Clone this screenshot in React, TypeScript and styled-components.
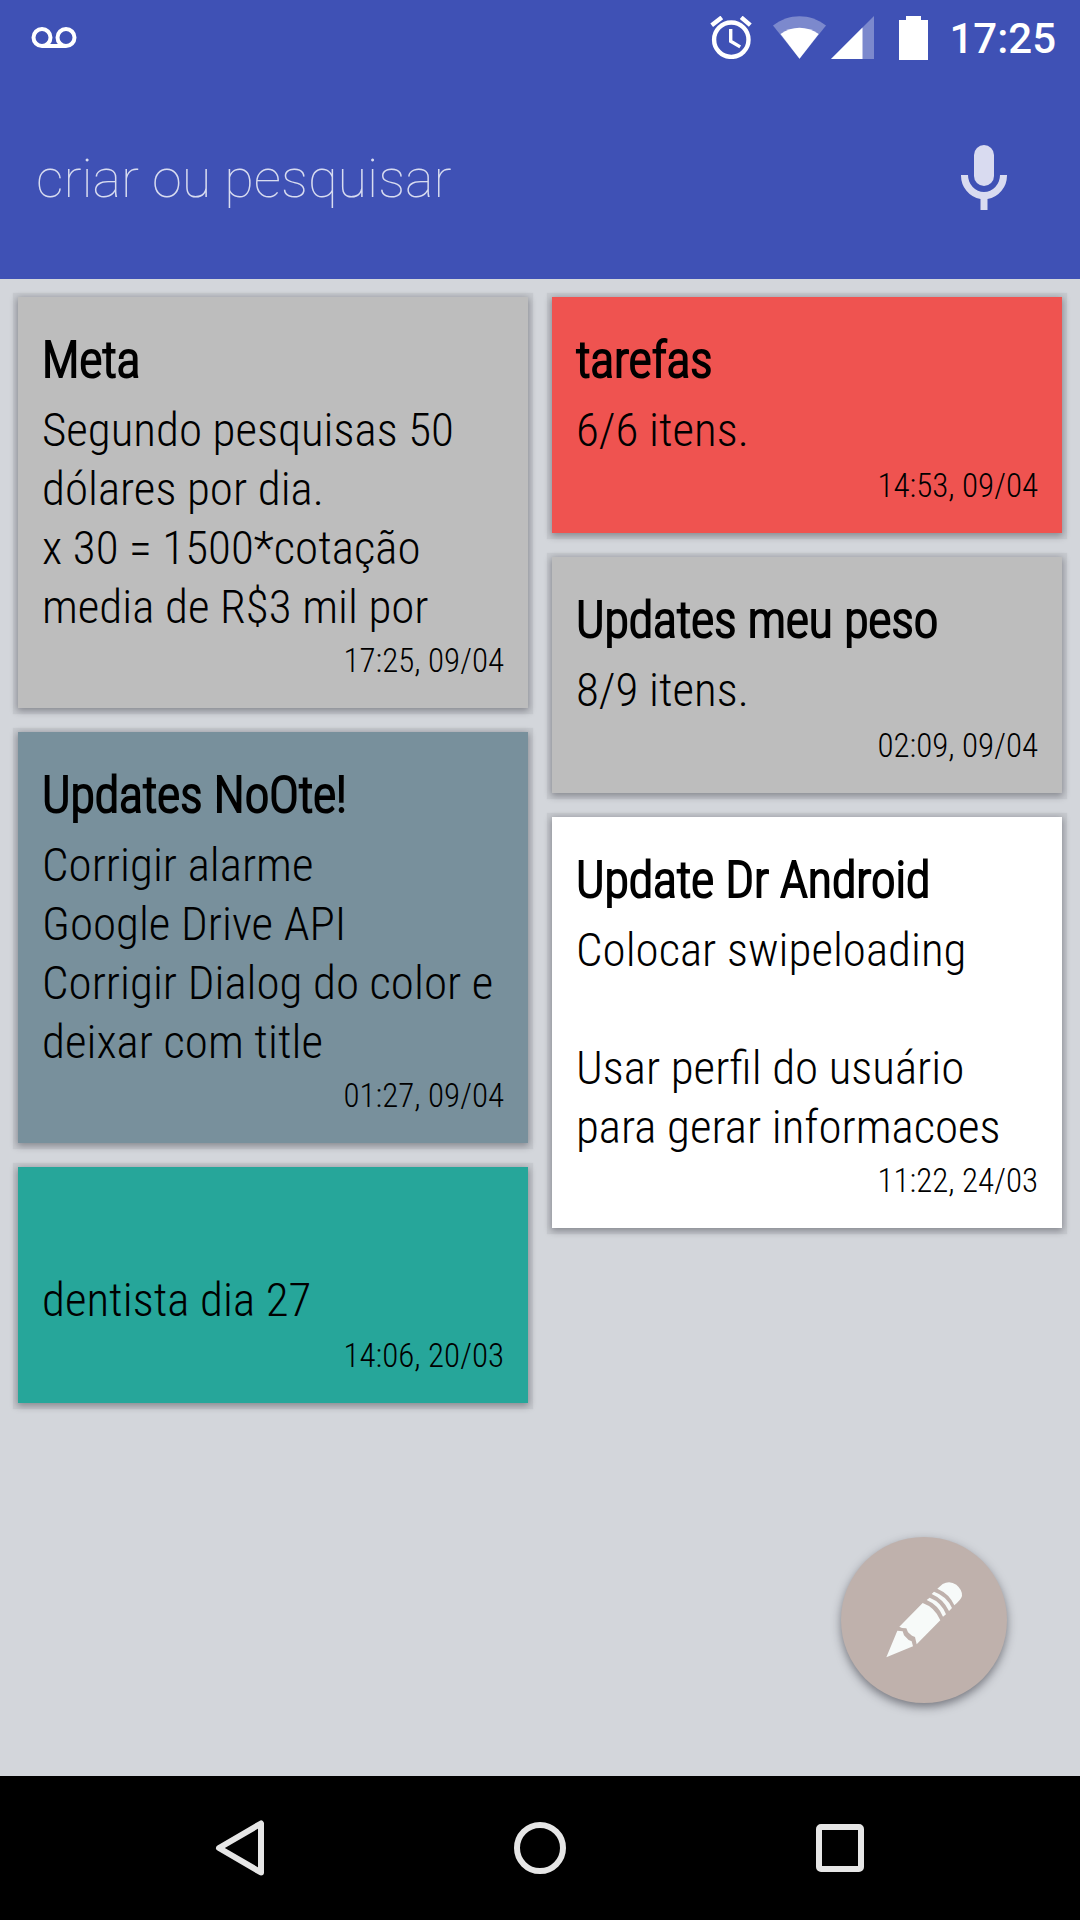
import React from "react";
import styled, { createGlobalStyle } from "styled-components";

const GlobalStyle = createGlobalStyle`
  *, *::before, *::after { box-sizing: border-box; }
  body { margin: 0; background: #d3d6db; }
  h2, p { margin: 0; font-weight: inherit; }
`;

const Screen = styled.div`
  display: flex;
  flex-direction: column;
  min-height: 100vh;
  background: #d3d6db;
  color: #000;
  font-family: "Roboto Condensed", Roboto, sans-serif;
`;

const Header = styled.header`
  background: #3f51b5;
  color: #fff;
`;

const StatusBar = styled.div`
  display: flex;
  align-items: center;
  height: 75px;
  padding: 0 24px 0 31px;
  svg { display: block; flex: none; }
`;

const StatusIcons = styled.div`
  display: flex;
  align-items: center;
  margin-left: auto;
`;

const Radio = styled.div`
  display: flex;
  gap: 5px;
  margin: 0 25px 0 21px;
`;

const Clock = styled.time`
  margin-left: 21px;
  padding-top: 2px;
  font: 500 42px/50px Roboto, sans-serif;
`;

const SearchBar = styled.form`
  display: flex;
  align-items: center;
  height: 204px;
  padding: 0 60px 0 36px;
`;

const SearchInput = styled.input`
  flex: 1;
  min-width: 0;
  padding: 4px 0 0;
  border: 0;
  outline: 0;
  background: transparent;
  color: #fff;
  font: 100 54px/64px Roboto, sans-serif;
  &::placeholder { color: #fff; opacity: 0.8; }
`;

const IconButton = styled.button`
  display: grid;
  place-items: center;
  width: 72px;
  height: 96px;
  padding: 0;
  border: 0;
  background: transparent;
`;

const Main = styled.main`
  position: relative;
  flex: 1;
  display: grid;
  grid-template-columns: repeat(2, minmax(0, 1fr));
  gap: 24px;
  align-items: start;
  padding: 18px;
`;

const Column = styled.div`
  display: flex;
  flex-direction: column;
  gap: 24px;
`;

const Card = styled.article<{ $color: string }>`
  padding: 30px 24px 26px;
  background: ${(p) => p.$color};
  box-shadow:
    0 2px 7px 1px rgba(30, 30, 40, 0.38),
    0 1px 1px 5px rgba(30, 30, 40, 0.06);
`;

const CardTitle = styled.h2`
  min-height: 66px;
  font-size: 50px;
  line-height: 66px;
  font-weight: 300;
  -webkit-text-stroke: 2px currentColor;
`;

const CardBody = styled.p`
  min-height: 61px;
  margin: 7px 0 4px;
  font-size: 47px;
  line-height: 59px;
  font-weight: 300;
  white-space: pre-line;
`;

const CardDate = styled.time`
  display: block;
  font-size: 33px;
  line-height: 42px;
  font-weight: 300;
  text-align: right;
`;

const Fab = styled.button`
  position: absolute;
  right: 73px;
  bottom: 73px;
  width: 166px;
  height: 166px;
  padding: 0;
  border: 0;
  border-radius: 50%;
  background: #bfb1ac;
  box-shadow: 0 4px 10px rgba(30, 30, 40, 0.5);
  svg { display: block; }
`;

const NavBar = styled.nav`
  display: flex;
  height: 144px;
  padding: 0 90px;
  background: #000;
`;

const NavButton = styled.button`
  flex: 1;
  display: grid;
  place-items: center;
  padding: 0;
  border: 0;
  background: transparent;
`;

type Note = { title: string; body: string; date: string; color: string };

const left: Note[] = [
  {
    title: "Meta",
    body: "Segundo pesquisas 50\ndólares por dia.\nx 30 = 1500*cotação\nmedia de R$3 mil por",
    date: "17:25, 09/04",
    color: "#bdbdbd",
  },
  {
    title: "Updates NoOte!",
    body: "Corrigir alarme\nGoogle Drive API\nCorrigir Dialog do color e\ndeixar com title",
    date: "01:27, 09/04",
    color: "#78909c",
  },
  { title: "", body: "dentista dia 27", date: "14:06, 20/03", color: "#26a69a" },
];

const right: Note[] = [
  { title: "tarefas", body: "6/6 itens.", date: "14:53, 09/04", color: "#ef5350" },
  { title: "Updates meu peso", body: "8/9 itens.", date: "02:09, 09/04", color: "#bdbdbd" },
  {
    title: "Update Dr Android",
    body: "Colocar swipeloading\n\nUsar perfil do usuário\npara gerar informacoes",
    date: "11:22, 24/03",
    color: "#ffffff",
  },
];

const NoteColumn = ({ notes }: { notes: Note[] }) => (
  <Column>
    {notes.map((n) => (
      <Card key={n.date} $color={n.color}>
        <CardTitle>{n.title}</CardTitle>
        <CardBody>{n.body}</CardBody>
        <CardDate>{n.date}</CardDate>
      </Card>
    ))}
  </Column>
);

export default function App() {
  return (
    <Screen>
      <GlobalStyle />
      <Header>
        <StatusBar>
          <svg width="46" height="21" viewBox="0 0 46 21" fill="none" stroke="#fff" strokeWidth="4" aria-hidden="true">
            <circle cx="11" cy="10.5" r="8.5" />
            <circle cx="35" cy="10.5" r="8.5" />
            <path d="M11 19h24" />
          </svg>
          <StatusIcons>
            <svg width="42" height="43" viewBox="0 0 42 43" fill="none" stroke="#fff" aria-hidden="true">
              <circle cx="21.3" cy="23.7" r="17.2" strokeWidth="4.4" />
              <path d="M20.7 13v12.3l9.5 5.6" strokeWidth="3.4" />
              <path d="M1.700 9.200 11.800 1.400M40.300 9.200 31.200 1.400" strokeWidth="4.4" />
            </svg>
            <Radio>
              <svg width="53" height="43" viewBox="0 0 53 43" fill="#fff" aria-hidden="true">
                <path d="M26.500 42.700 0 9.500C15.500-3 37.500-3 53 9.500Z" opacity=".32" />
                <path d="M26.500 42.700 7.500 18C19 9.500 34 9.500 45.700 18Z" />
              </svg>
              <svg width="43" height="43" viewBox="0 0 43 43" fill="#fff" aria-hidden="true">
                <path d="M0 43 43 0V43Z" opacity=".32" />
                <path d="M0 43 31.500 11.500V43Z" />
              </svg>
            </Radio>
            <svg width="29" height="44" viewBox="0 0 29 44" fill="#fff" aria-hidden="true">
              <path d="M0 4h7V0h15v4h7v40H0Z" />
            </svg>
            <Clock>17:25</Clock>
          </StatusIcons>
        </StatusBar>
        <SearchBar onSubmit={(e) => e.preventDefault()}>
          <SearchInput aria-label="criar ou pesquisar" placeholder="criar ou pesquisar" />
          <IconButton type="button" aria-label="Voz">
            <svg width="46" height="65" viewBox="0 0 46 65" fill="#d9dbf0">
              <rect x="13" y="0" width="20" height="41" rx="10" />
              <path d="M0 30h7a16 17 0 0 0 32 0h7a23 24 0 0 1-19.500 24v11h-7V54A23 24 0 0 1 0 30Z" />
            </svg>
          </IconButton>
        </SearchBar>
      </Header>
      <Main>
        <NoteColumn notes={left} />
        <NoteColumn notes={right} />
        <Fab type="button" aria-label="Nova nota">
          <svg width="166" height="166" viewBox="63 51 498 498" fill="#f7faf9">
            <path d="M352 206 368 192Q389 180 409 194 428 210 426 228 423 239 403 256 389 222 352 206Z" />
            <path d="M335 222 342 215Q380 228 396 264L387 273Q370 237 335 222Z" />
            <path d="M320 240 329 233Q365 247 378 283L369 290Q355 255 320 240Z" />
            <path d="M308 249Q345 262 361 301L290 373 285 351 276 347 264 337 259 325 246 324 238 320Z" />
            <path d="M232 332 248 334 252 346 266 360 275 364 279 379 199 412Z" />
          </svg>
        </Fab>
      </Main>
      <NavBar>
        <NavButton type="button" aria-label="Voltar">
          <svg width="50" height="56" viewBox="0 0 50 56" fill="none" stroke="#e6e6e6" strokeWidth="6" strokeLinejoin="round">
            <path d="M46 3.500V52.500L4 28Z" />
          </svg>
        </NavButton>
        <NavButton type="button" aria-label="Início">
          <svg width="52" height="52" viewBox="0 0 52 52" fill="none" stroke="#e6e6e6" strokeWidth="6">
            <circle cx="26" cy="26" r="23" />
          </svg>
        </NavButton>
        <NavButton type="button" aria-label="Recentes">
          <svg width="48" height="48" viewBox="0 0 48 48" fill="none" stroke="#e6e6e6" strokeWidth="6">
            <rect x="3" y="3" width="42" height="42" rx="2" />
          </svg>
        </NavButton>
      </NavBar>
    </Screen>
  );
}
